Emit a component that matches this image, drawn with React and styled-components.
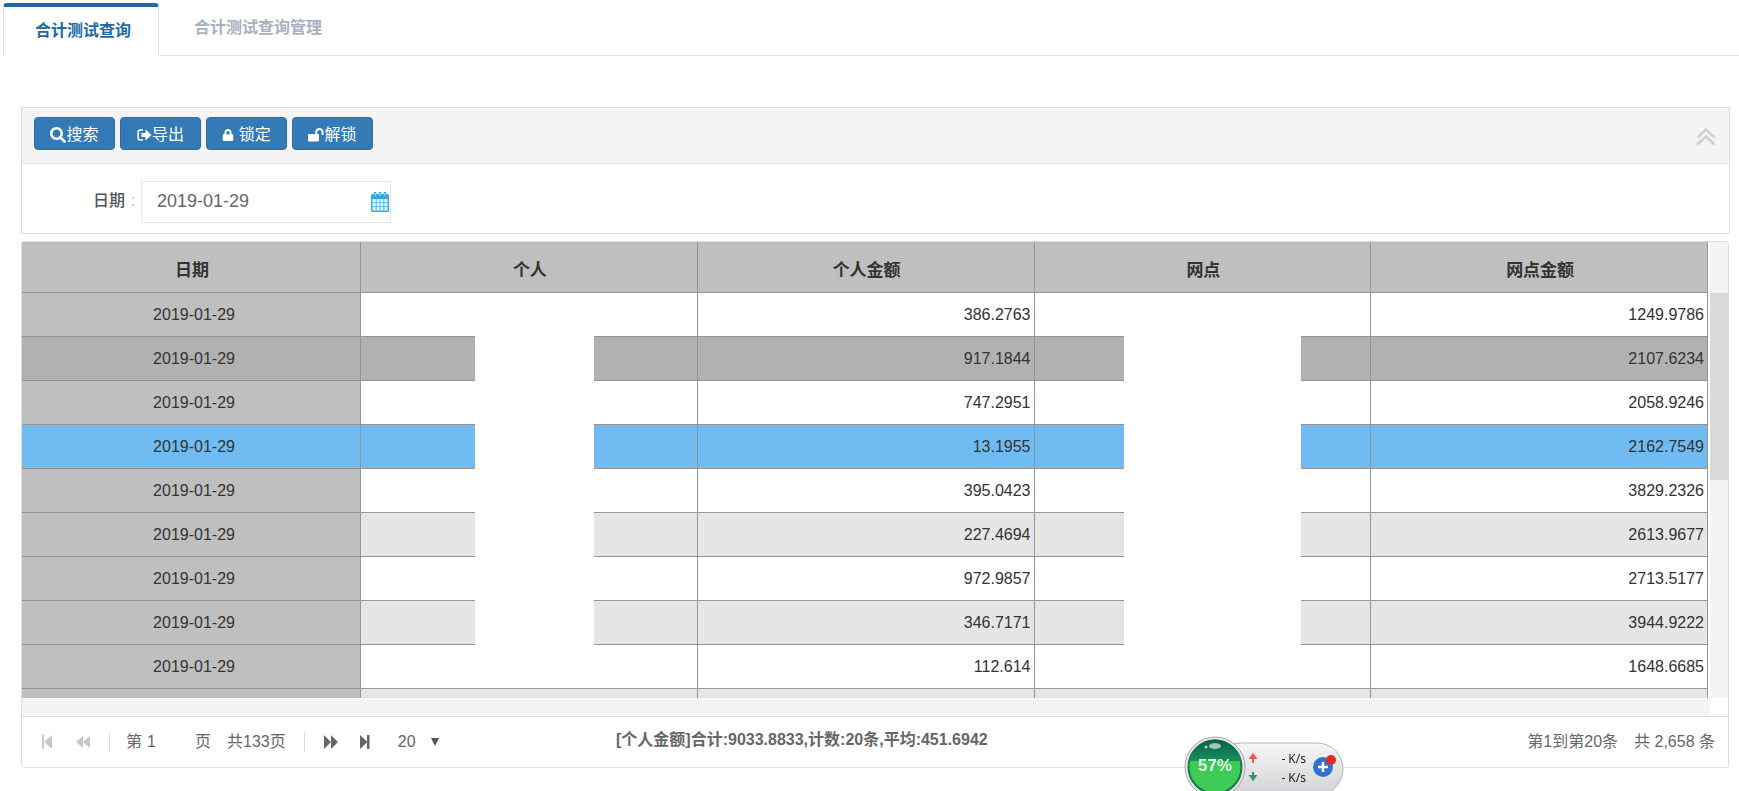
import React, { useState } from 'react';
import styled, { createGlobalStyle, css } from 'styled-components';
import { FaSearch, FaLock } from 'react-icons/fa';

const BLUE = '#337ab7';
const LINE = '#959595';
const BORDER = '#dddddd';
const PALE = '#f4f4f4';

const GlobalStyle = createGlobalStyle`
  * {
    box-sizing: border-box;
  }

  body {
    margin: 0;
    background: #fff;
    color: #666;
    font: 16px/24px "Liberation Sans", "Noto Sans CJK SC", sans-serif;
  }

  button, input, select {
    font: inherit;
    color: inherit;
  }
`;

const FLEX = (align, justify) => css`
  display: flex;
  align-items: ${align || 'stretch'};
  justify-content: ${justify || 'flex-start'};
`;

const Page = styled.div`
  min-height: 100vh;
  overflow: hidden;
`;

const TabBar = styled.nav`
  ${FLEX('flex-end')};
  height: 56px;
  padding: 3px 0 0 3px;
`;

const Tab = styled.button`
  height: 53px;
  padding: ${(p) => (p.$active ? '0 27px 0 31px' : '0 32px 6px 34px')};
  border: 1px solid ${(p) => (p.$active ? BORDER : 'transparent')};
  border-top: 4px solid ${(p) => (p.$active ? '#1c6ba5' : 'transparent')};
  border-bottom-color: ${(p) => (p.$active ? 'transparent' : BORDER)};
  border-radius: ${(p) => (p.$active ? '4px 4px 0 0' : '0')};
  background: none;
  color: ${(p) => (p.$active ? '#1c6ba5' : '#a7b1c2')};
  font-weight: 600;
`;

const TabFill = styled.div`
  flex: 1;
  border-bottom: 1px solid ${BORDER};
`;

const Content = styled.main`
  padding: 51px 9px 0 21px;
`;

const SearchPanel = styled.section`
  border: 1px solid ${BORDER};
  margin-bottom: 7px;
`;

const Toolbar = styled.div`
  ${FLEX('flex-start')};
  gap: 5px;
  height: 56px;
  padding: 9px 12px;
  background: ${PALE};
  border-bottom: 1px solid #e7e7e7;
`;

const ToolButton = styled.button`
  ${FLEX('center', 'center')};
  min-width: 81px;
  height: 33px;
  padding: 2px 12px 0;
  border: 1px solid #2e6da4;
  border-radius: 4px;
  background: ${BLUE};
  color: #fff;
`;

const CollapseButton = styled.button`
  ${FLEX('center', 'center')};
  margin: 10px 0 0 auto;
  padding: 0;
  border: 0;
  background: none;
  color: #d0d0d0;
`;

const FilterRow = styled.div`
  ${FLEX('center')};
  padding: 17px 0 10px 71px;
`;

const FilterLabel = styled.label`
  width: 48px;
  padding-bottom: 2px;
  color: #555;
  font-weight: 500;
  white-space: nowrap;
`;

const Colon = styled.span`
  margin-left: 6px;
  color: #bbb;
`;

const DateBox = styled.div`
  ${FLEX('center')};
  width: 250px;
  height: 42px;
  border: 1px solid #e5e6e7;
`;

const DateInput = styled.input`
  flex: 1;
  min-width: 0;
  padding: 0 15px 2px;
  border: 0;
  outline: 0;
  background: none;
  font-size: 18px;
`;

const IconButton = styled.button`
  ${FLEX('center', 'center')};
  width: ${(p) => p.$width || 20}px;
  height: 24px;
  padding: 0;
  border: 0;
  background: none;
  color: ${(p) => (p.disabled ? '#c8c8c8' : '#666')};
`;

const GridPanel = styled.section`
  margin-right: 1px;
  border: 1px solid ${BORDER};
  border-radius: 3px;
`;

const GridArea = styled.div`
  display: grid;
  grid-template-columns: 1fr 18px;
  column-gap: 2px;
`;

const GridViewport = styled.div`
  position: relative;
  max-height: 456px;
  overflow: hidden;
`;

const Table = styled.table`
  width: 100%;
  table-layout: fixed;
  border-spacing: 0;
  color: #333;
`;

const HeadCell = styled.th`
  height: 51px;
  padding: 7px 0 0 2px;
  border-right: 1px solid ${LINE};
  border-bottom: 1px solid ${LINE};
  background: #bfbfbf;
  font-size: 17px;
  font-weight: 700;

  &:first-child {
    width: 339px;
  }
`;

const Row = styled.tr`
  background: ${(p) => p.$background};
`;

const Cell = styled.td`
  height: 44px;
  padding: 0 3px 0 9px;
  border-right: 1px solid ${LINE};
  border-bottom: 1px solid ${LINE};
  background: ${(p) => p.$background || 'transparent'};
  text-align: ${(p) => p.$align || 'right'};
`;

const Mask = styled.div`
  position: absolute;
  top: 94px;
  left: ${(p) => p.$left}%;
  width: ${(p) => p.$width}%;
  height: 310px;
  background: #fff;
`;

const Track = styled.div`
  padding-top: 51px;
  background: ${PALE};
`;

const Thumb = styled.div`
  height: 187px;
  background: #dadada;
`;

const BottomTrack = styled.div`
  height: 17px;
  margin: 1px 18px 0 0;
  background: ${PALE};
`;

const Pager = styled.footer`
  display: grid;
  grid-template-columns: 594px 1fr auto;
  align-items: center;
  height: 51px;
  padding-right: 13px;
  border-top: 1px solid ${BORDER};
`;

const PagerControls = styled.div`
  ${FLEX('center')};
  padding-left: 15px;
`;

const Divider = styled.span`
  width: 1px;
  height: 20px;
  margin-right: 16px;
  background: ${BORDER};
`;

const PageLabel = styled.label`
  ${FLEX('center')};
  margin-right: 16px;
`;

const PageInput = styled.input`
  width: 48px;
  padding: 0;
  margin: 0 0 0 5px;
  border: 0;
  outline: 0;
  background: none;
`;

const PageCount = styled.span`
  margin-right: 18px;
`;

const SizeBox = styled.div`
  ${FLEX('center')};
  margin-left: 9px;
`;

const SizeSelect = styled.select`
  width: 33px;
  padding: 0;
  border: 0;
  background: none;
  appearance: none;
`;

const Summary = styled.strong`
  padding-bottom: 4px;
  font-weight: 700;
`;

const Totals = styled.div`
  ${FLEX('center')};
  gap: 16px;
`;

const Monitor = styled.aside`
  position: fixed;
  right: 394px;
  bottom: -6px;
  width: 160px;
  height: 62px;
`;

const MonitorArt = styled.svg`
  position: absolute;
  inset: 0;
  overflow: visible;
`;

const Percent = styled.span`
  position: absolute;
  left: 2px;
  top: 19px;
  width: 56px;
  text-align: center;
  color: #e6f7ea;
  font-size: 17px;
  font-weight: 700;
`;

const Speeds = styled.div`
  position: absolute;
  right: 39px;
  top: 14px;
  color: #222;
  font: 12px/19px "Noto Sans", sans-serif;
  text-align: right;
`;

const ExportIcon = () => (
  <svg width="15" height="16" viewBox="0 0 15 16" fill="none" aria-hidden="true">
    <path d="M6 3H3.2A2 2 0 0 0 1.2 5v6a2 2 0 0 0 2 2H6" stroke="#fff" strokeWidth="1.6" />
    <path d="M4.5 6H8.500V2.500L14.500 8l-6 5.500V10h-4z" fill="#fff" />
  </svg>
);

const UnlockIcon = () => (
  <svg width="16" height="16" viewBox="0 0 16 16" fill="none" aria-hidden="true">
    <rect y="7" width="11" height="7.5" rx="1" fill="#fff" />
    <path d="M8.2 7.5V5.2a3.2 3.2 0 0 1 6.4 0V8" stroke="#fff" strokeWidth="1.9" />
  </svg>
);

const CollapseIcon = () => (
  <svg width="21" height="20" viewBox="0 0 21 20" fill="none" stroke="currentColor" strokeWidth="2.6" aria-hidden="true">
    <path d="M1.500 10.500 10 2.500l8.500 8M1.500 17.500 10 9.500l8.500 8" />
  </svg>
);

const CalendarIcon = () => (
  <svg width="20" height="22" viewBox="0 0 20 22" aria-hidden="true">
    <rect x="1" y="3" width="18" height="18" rx="1.5" fill="#35a9dd" />
    <path d="M5 1v4M10 1v4M15 1v4" stroke="#35a9dd" strokeWidth="2.5" />
    <path d="M5 2v3M10 2v3M15 2v3" stroke="#bfe6f7" strokeWidth="1" />
    <rect x="2.5" y="8" width="15" height="11.5" fill="#e3f5fc" />
    <path d="M2.5 11.7h15M2.5 15.6h15M6.2 8v11.5M10 8v11.5M13.8 8v11.5" stroke="#52bbe6" strokeWidth="1" />
  </svg>
);

const EndIcon = ({ flip }) => (
  <svg width="12" height="14" viewBox="0 0 12 14" fill="currentColor" aria-hidden="true">
    <path d={flip ? 'M1 0h2v14H1zM11 0v14L3 7z' : 'M8 0h2.500v14H8zM1 0v14l7.500-7z'} />
  </svg>
);

const StepIcon = ({ flip }) => (
  <svg width="16" height="14" viewBox="0 0 16 14" fill="currentColor" aria-hidden="true">
    <path d={flip ? 'M8 1v12L1 7zM15 1v12L8 7z' : 'M1 0v14l7-7zM8 0v14l7-7z'} />
  </svg>
);

const DownIcon = () => (
  <svg width="8" height="8" viewBox="0 0 8 8" fill="#555" aria-hidden="true">
    <path d="M0 0h8L4 8z" />
  </svg>
);

const tools = [
  { label: '搜索', icon: <FaSearch size={16} /> },
  { label: '导出', icon: <ExportIcon /> },
  { label: '锁定', icon: <><FaLock size={12} />&nbsp;</> },
  { label: '解锁', icon: <UnlockIcon /> },
];

const columns = ['日期', '个人', '个人金额', '网点', '网点金额'];

const rows = [
  { personal: '386.2763', branch: '1249.9786' },
  { personal: '917.1844', branch: '2107.6234', state: 'hover' },
  { personal: '747.2951', branch: '2058.9246' },
  { personal: '13.1955', branch: '2162.7549', state: 'selected' },
  { personal: '395.0423', branch: '3829.2326' },
  { personal: '227.4694', branch: '2613.9677' },
  { personal: '972.9857', branch: '2713.5177' },
  { personal: '346.7171', branch: '3944.9222' },
  { personal: '112.614', branch: '1648.6685' },
  { personal: '', branch: '' },
];

const stateColors = { hover: '#b1b1b1', selected: '#70bbf1' };

const App = () => {
  const [date, setDate] = useState('2019-01-29');
  const [page, setPage] = useState('1');

  return <Page>
    <GlobalStyle />
    <TabBar>
      <Tab $active>合计测试查询</Tab>
      <Tab>合计测试查询管理</Tab>
      <TabFill />
    </TabBar>

    <Content>
      <SearchPanel>
        <Toolbar>
          {tools.map((tool) => (
            <ToolButton key={tool.label}>{tool.icon}{tool.label}</ToolButton>
          ))}
          <CollapseButton aria-label="收起"><CollapseIcon /></CollapseButton>
        </Toolbar>
        <FilterRow>
          <FilterLabel htmlFor="date">日期<Colon>:</Colon></FilterLabel>
          <DateBox>
            <DateInput id="date" value={date} onChange={(e) => setDate(e.target.value)} />
            <IconButton aria-label="选择日期"><CalendarIcon /></IconButton>
          </DateBox>
        </FilterRow>
      </SearchPanel>

      <GridPanel>
        <GridArea>
          <GridViewport>
            <Table>
              <thead>
                <tr>{columns.map((name) => <HeadCell key={name}>{name}</HeadCell>)}</tr>
              </thead>
              <tbody>
                {rows.map((row, i) => (
                  <Row key={i} $background={stateColors[row.state] || (i % 2 ? '#e5e5e5' : '#fff')}>
                    <Cell $align="center" $background={stateColors[row.state] || '#bfbfbf'}>
                      {row.personal && '2019-01-29'}
                    </Cell>
                    <Cell />
                    <Cell>{row.personal}</Cell>
                    <Cell />
                    <Cell>{row.branch}</Cell>
                  </Row>
                ))}
              </tbody>
            </Table>
            <Mask $left={26.85} $width={7.1} />
            <Mask $left={65.35} $width={10.5} />
          </GridViewport>
          <Track><Thumb /></Track>
        </GridArea>
        <BottomTrack />

        <Pager>
          <PagerControls>
            <IconButton disabled aria-label="首页"><EndIcon flip /></IconButton>
            <IconButton disabled $width={52} aria-label="上一页"><StepIcon flip /></IconButton>
            <Divider />
            <PageLabel>
              第<PageInput value={page} onChange={(e) => setPage(e.target.value)} />页
            </PageLabel>
            <PageCount>共133页</PageCount>
            <Divider />
            <IconButton aria-label="下一页"><StepIcon /></IconButton>
            <IconButton $width={48} aria-label="末页"><EndIcon /></IconButton>
            <SizeBox>
              <SizeSelect defaultValue="20" aria-label="每页条数">
                <option>20</option>
                <option>50</option>
              </SizeSelect>
              <DownIcon />
            </SizeBox>
          </PagerControls>
          <Summary>[个人金额]合计:9033.8833,计数:20条,平均:451.6942</Summary>
          <Totals>
            <span>第1到第20条</span>
            <span>共 2,658 条</span>
          </Totals>
        </Pager>
      </GridPanel>
    </Content>

    <Monitor>
      <MonitorArt width="160" height="62" viewBox="0 0 160 62" aria-hidden="true">
        <defs>
          <linearGradient id="pill" x1="0" y1="0" x2="0" y2="1">
            <stop offset="0" stopColor="#f6f6f6" />
            <stop offset="1" stopColor="#d2d2d6" />
          </linearGradient>
          <linearGradient id="dome" x1="0" y1="0" x2="0" y2="1">
            <stop offset="0" stopColor="#0b6048" />
            <stop offset="1" stopColor="#15905a" />
          </linearGradient>
        </defs>
        <rect x="30" y="8" width="128" height="52" rx="26" fill="url(#pill)" stroke="#b5b5b8" />
        <circle cx="30" cy="32" r="30" fill="#e8e4ea" stroke="#a8a4aa" />
        <circle cx="30" cy="32" r="26.500" fill="#3ecb55" stroke="#117a4a" strokeWidth="2" />
        <path d="M4 26a26.500 26.500 0 0 1 52 0z" fill="url(#dome)" />
        <ellipse cx="30" cy="11" rx="6" ry="3" fill="#fff" opacity="0.6" />
        <circle cx="21" cy="12" r="1.5" fill="#fff" opacity="0.7" />
        <path d="M68 28v-6M65.5 23 68 19.500l2.500 3.500z" stroke="#e8604c" strokeWidth="2" fill="#e8604c" />
        <path d="M68 37v6M65.500 41 68 44.500l2.500-3.500z" stroke="#2f9a66" strokeWidth="2" fill="#2f9a66" />
        <circle cx="138" cy="32" r="10" fill="#2f73cf" />
        <path d="M138 27v10M133 32h10" stroke="#fff" strokeWidth="2.500" />
        <circle cx="146" cy="25" r="5" fill="#e02b26" />
      </MonitorArt>
      <Percent>57%</Percent>
      <Speeds>
        <div>- K/s</div>
        <div>- K/s</div>
      </Speeds>
    </Monitor>
  </Page>;
};

export default App;
